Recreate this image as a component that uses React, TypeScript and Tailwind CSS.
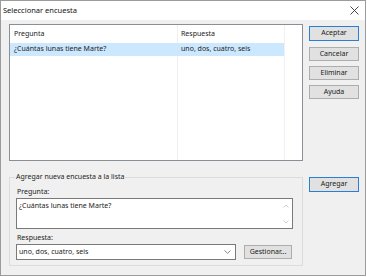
import React from 'react';

const font = { fontFamily: '"Noto Sans", "Liberation Sans", sans-serif' };

function Btn({ label, primary = false, tall = false }: { label: string; primary?: boolean; tall?: boolean }) {
  return (
    <div
      className={`w-[50px] ${tall ? 'h-[15px]' : 'h-[14px]'} flex items-center justify-center bg-[#e1e1e1] text-[7px] text-[#222] ${
        primary ? 'border-[1.5px] border-[#2a7fd4]' : 'border border-[#adadad]'
      }`}
    >
      {label}
    </div>
  );
}

export default function App() {
  return (
    <div className="w-[367px] h-[277px] bg-white" style={font}>
      <div className="w-[366px] h-[276px] border border-[#9b9b9b] bg-[#f0f0f0] flex flex-col">
        {/* Title bar */}
        <div className="h-[19px] bg-white flex items-center justify-between pl-[2px] pr-[6px] shrink-0">
          <span className="text-[7.5px] text-[#111] leading-none">Seleccionar encuesta</span>
          <svg width="9" height="9" viewBox="0 0 9 9" className="mt-[-1px]">
            <path d="M0.5 0.5 L8.5 8.5 M8.5 0.5 L0.5 8.5" stroke="#333" strokeWidth="0.9" fill="none" />
          </svg>
        </div>

        {/* Body */}
        <div className="flex-1 flex pl-[8px] pt-[4px]">
          <div className="w-[294px] flex flex-col">
            {/* List view */}
            <div className="h-[137px] border border-[#8a8e95] bg-white relative text-[7px] text-[#222]">
              <div className="absolute top-0 bottom-0 left-[167px] w-px bg-[#f0f0f0]" />
              <div className="absolute top-0 bottom-0 left-[274px] w-px bg-[#f0f0f0]" />
              <div className="h-[18px] flex items-center">
                <span className="w-[168px] pl-[4px]">Pregunta</span>
                <span className="pl-[3px]">Respuesta</span>
              </div>
              <div className="h-[13px] w-[274px] flex items-center bg-[#cce8ff] relative">
                <span className="w-[168px] pl-[4px]">¿Cuántas lunas tiene Marte?</span>
                <span className="pl-[3px]">uno, dos, cuatro, seis</span>
              </div>
            </div>

            {/* Group box */}
            <div className="mt-[16px] h-[89px] border border-[#dcdcdc] relative px-[6px] pt-[8px] text-[7px] text-[#222]">
              <span className="absolute left-[5px] top-[-6px] bg-[#f0f0f0] px-px leading-[10px]">
                Agregar nueva encuesta a la lista
              </span>
              <div className="h-[11px] leading-[11px] pl-[1px]">Pregunta:</div>
              <div className="mt-[1px] h-[31px] w-[277px] border border-[#7a7a7a] bg-white flex">
                <div className="flex-1 pl-[2px] pt-[1px] leading-[11px]">¿Cuántas lunas tiene Marte?</div>
                <div className="w-[13px] flex flex-col items-center justify-between pt-[5px] pb-[4px]">
                  <svg width="6" height="4" viewBox="0 0 6 4">
                    <path d="M0.5 3.5 L3 1 L5.5 3.5" stroke="#c2c2c2" strokeWidth="0.8" fill="none" />
                  </svg>
                  <svg width="6" height="4" viewBox="0 0 6 4">
                    <path d="M0.5 0.5 L3 3 L5.5 0.5" stroke="#c2c2c2" strokeWidth="0.8" fill="none" />
                  </svg>
                </div>
              </div>
              <div className="mt-[3px] h-[11px] leading-[11px] pl-[1px]">Respuesta:</div>
              <div className="mt-px flex items-start">
                <div className="w-[220px] h-[16px] border border-[#7a7a7a] bg-white flex items-center justify-between pl-[2px] pr-[4px]">
                  <span>uno, dos, cuatro, seis</span>
                  <svg width="7" height="4" viewBox="0 0 7 4">
                    <path d="M0.5 0.5 L3.5 3.3 L6.5 0.5" stroke="#707070" strokeWidth="0.8" fill="none" />
                  </svg>
                </div>
                <div className="ml-[8px] mt-[1px] w-[48px] h-[14px] flex items-center justify-center bg-[#e1e1e1] border border-[#adadad]">
                  Gestionar...
                </div>
              </div>
            </div>
          </div>

          {/* Button column */}
          <div className="ml-[6px] flex flex-col mt-[2px]">
            <Btn label="Aceptar" primary tall />
            <div className="mt-[6px] flex flex-col gap-[5px]">
              <Btn label="Cancelar" />
              <Btn label="Eliminar" />
              <Btn label="Ayuda" />
            </div>
            <div className="mt-[78px]">
              <Btn label="Agregar" primary tall />
            </div>
          </div>
        </div>
      </div>
    </div>
  );
}
